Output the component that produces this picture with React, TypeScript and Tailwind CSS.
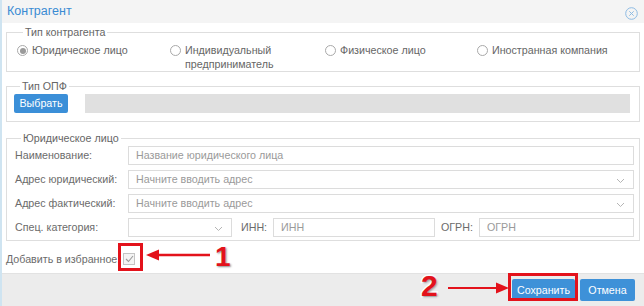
import React from "react";

function Radio({ checked }: { checked?: boolean }) {
  return (
    <span className="mt-[2px] flex h-[11px] w-[11px] shrink-0 items-center justify-center rounded-full border border-[#a9a9a9] bg-white">
      {checked && <span className="h-[6px] w-[6px] rounded-full bg-[#9a9a9a]" />}
    </span>
  );
}

function Chevron() {
  return (
    <svg width="9" height="6" viewBox="0 0 9 6" className="absolute right-[8px] top-[7px]">
      <path d="M1 1l3.5 3.5L8 1" fill="none" stroke="#b5b5b5" strokeWidth="1" />
    </svg>
  );
}

function Field({ text, select, className }: { text?: string; select?: boolean; className?: string }) {
  return (
    <div
      className={
        "relative flex h-[19px] items-center border border-[#dcdcdc] bg-white pl-[7px] text-[10.7px] text-[#9a9a9a] " +
        (className ?? "flex-1")
      }
    >
      {text}
      {select && <Chevron />}
    </div>
  );
}

function Row({ label, children }: { label: string; children: React.ReactNode }) {
  return (
    <div className="flex items-center">
      <span className="w-[113px] shrink-0 text-[10.7px] text-[#6b6b6b]">{label}</span>
      {children}
    </div>
  );
}

export default function App() {
  return (
    <div
      className="relative flex h-[306px] w-[644px] flex-col overflow-hidden border-l-[2px] border-[#cfe4f1] bg-white"
      style={{ fontFamily: '"Liberation Sans", Arial, sans-serif' }}
    >
      <div className="flex h-[23px] shrink-0 items-center justify-between bg-[#f4f4f4] pl-[5px] pr-[6px]">
        <span className="text-[12.5px] text-[#3a8bd3]">Контрагент</span>
        <svg width="13" height="13" viewBox="0 0 13 13" className="mt-[3px]">
          <circle cx="6.5" cy="6.5" r="5.8" fill="none" stroke="#8dbbe3" strokeWidth="1" />
          <path d="M4.3 4.3l4.4 4.4M8.7 4.3l-4.4 4.4" stroke="#8dbbe3" strokeWidth="1" />
        </svg>
      </div>

      <div className="flex flex-1 flex-col px-[4px]">
        <fieldset className="mt-[3px] border border-[#dedede] pl-[10px]">
          <legend className="ml-[6px] px-[2px] text-[10.7px] leading-[13px] text-[#666]">Тип контрагента</legend>
          <div className="grid grid-cols-[153px_155px_152px_1fr] pt-[4px] text-[10.7px] leading-[14px] text-[#666]">
            <div className="flex gap-[4px]">
              <Radio checked />
              <span>Юридическое лицо</span>
            </div>
            <div className="flex gap-[4px]">
              <Radio />
              <span>
                Индивидуальный
                <br />
                предприниматель
              </span>
            </div>
            <div className="flex gap-[4px]">
              <Radio />
              <span>Физическое лицо</span>
            </div>
            <div className="flex gap-[4px]">
              <Radio />
              <span>Иностранная компания</span>
            </div>
          </div>
        </fieldset>

        <fieldset className="mt-[8px] border border-[#dedede] pb-[8px] pl-[7px] pr-[9px]">
          <legend className="ml-[6px] px-[2px] text-[10.7px] leading-[13px] text-[#666]">Тип ОПФ</legend>
          <div className="mt-[1px] flex gap-[17px]">
            <button className="h-[19px] w-[54px] rounded-[2px] bg-[#3b8fd8] text-[10.7px] text-white">Выбрать</button>
            <div className="h-[19px] flex-1 bg-[#e0e0e0]" />
          </div>
        </fieldset>

        <fieldset className="mt-[10px] border border-[#dedede] pb-[3px] pl-[8px] pr-[5px]">
          <legend className="ml-[6px] px-[2px] text-[10.7px] leading-[13px] text-[#666]">Юридическое лицо</legend>
          <div className="mt-[1px] flex flex-col gap-[5px]">
            <Row label="Наименование:">
              <Field text="Название юридического лица" />
            </Row>
            <Row label="Адрес юридический:">
              <Field text="Начните вводить адрес" select />
            </Row>
            <Row label="Адрес фактический:">
              <Field text="Начните вводить адрес" select />
            </Row>
            <Row label="Спец. категория:">
              <Field select className="w-[104px]" />
              <span className="ml-[9px] w-[32px] text-[10.7px] text-[#6b6b6b]">ИНН:</span>
              <Field text="ИНН" />
              <span className="ml-[6px] w-[38px] text-[10.7px] text-[#6b6b6b]">ОГРН:</span>
              <Field text="ОГРН" className="w-[155px]" />
            </Row>
          </div>
        </fieldset>

        <div className="mt-[10px] flex items-center">
          <span className="text-[10.7px] text-[#6b6b6b]">Добавить в избранное:</span>
          <span className="ml-[3px] flex h-[12px] w-[12px] items-center justify-center border border-[#c4c4c4] bg-[#f4f4f4]">
            <svg width="9" height="8" viewBox="0 0 9 8">
              <path d="M1 4l2.5 2.5L8 1" fill="none" stroke="#9a9a9a" strokeWidth="1.1" />
            </svg>
          </span>
        </div>
      </div>

      <div className="flex h-[33px] shrink-0 items-center justify-end gap-[5px] border-t border-[#e2e2e2] bg-[#ececec] pr-[9px]">
        <button className="h-[22px] w-[63px] rounded-[2px] bg-[#3e91d8] text-[10.7px] text-white">Сохранить</button>
        <button className="h-[22px] w-[55px] rounded-[2px] bg-[#3e91d8] text-[10.7px] text-white">Отмена</button>
      </div>

      {/* annotations */}
      <div className="absolute left-[116px] top-[243px] h-[28px] w-[25px] border-[3px] border-[#e3121b]" />
      <div className="absolute left-[506px] top-[273px] h-[28px] w-[70px] border-[3px] border-[#e3121b]" />
      <svg className="absolute left-[142px] top-[248px]" width="70" height="14" viewBox="0 0 70 14">
        <path d="M14 7H66" stroke="#e3121b" strokeWidth="2.5" />
        <path d="M2 7L15 1.5V12.5Z" fill="#e3121b" />
      </svg>
      <svg className="absolute left-[444px] top-[281px]" width="66" height="14" viewBox="0 0 66 14">
        <path d="M2 7H52" stroke="#e3121b" strokeWidth="2" />
        <path d="M63 7L50 1.5V12.5Z" fill="#e3121b" />
      </svg>
      <span
        className="absolute left-[213px] top-[240px] text-[28px] font-bold leading-[34px] text-[#e3121b] [-webkit-text-stroke:3px_white] [paint-order:stroke_fill]"
        style={{ textShadow: "1px 1px 2px rgba(0,0,0,0.45)" }}
      >
        1
      </span>
      <span
        className="absolute left-[419px] top-[269px] text-[30px] font-bold leading-[34px] text-[#e3121b] [-webkit-text-stroke:3px_white] [paint-order:stroke_fill]"
        style={{ textShadow: "1px 1px 2px rgba(0,0,0,0.45)" }}
      >
        2
      </span>
    </div>
  );
}
